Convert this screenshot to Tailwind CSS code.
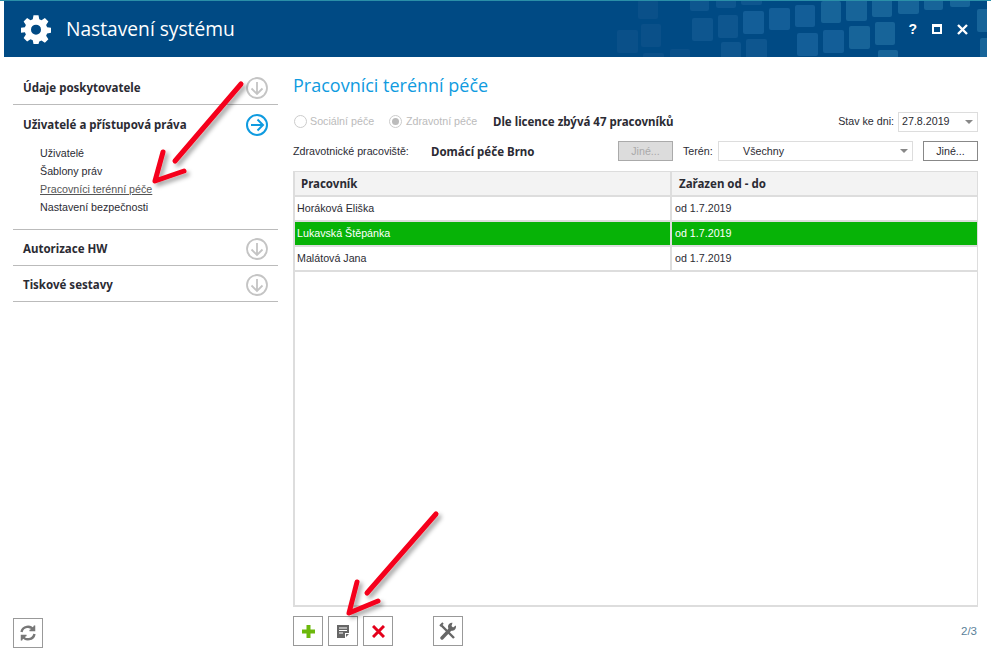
<!DOCTYPE html>
<html lang="cs">
<head>
    <meta charset="UTF-8">
    <title>Nastavení systému</title>
    <script src="https://cdn.jsdelivr.net/npm/@tailwindcss/browser@4"></script>
</head>
<body class="bg-white">
<div class="relative w-[991px] h-[658px] overflow-hidden bg-white font-['Liberation_Sans',sans-serif] text-[10.7px] text-[#2b2b33]">
    <!--Header-->
    <div class="h-px bg-[#2a8fa8]"></div>
    <div class="relative ml-[4px] w-[983px] h-[56px] bg-[#004a84] flex items-center overflow-hidden">
        <svg class="absolute left-0 top-0" width="983" height="56" viewBox="4 1 983 56">
            <g fill="#0a5089">
                <rect x="638" y="0" width="20" height="19" rx="2"/>
                <rect x="641" y="24" width="20" height="23" rx="2"/>
                <rect x="617" y="30" width="21" height="23" rx="2"/>
                <rect x="670" y="49" width="20" height="12" rx="2"/>
                <rect x="643" y="53" width="21" height="8" rx="2"/>
            </g>
            <g fill="#0e568f">
                <rect x="690" y="-4" width="19" height="15" rx="2"/>
                <rect x="716" y="-6" width="20" height="14" rx="2"/>
                <rect x="741" y="-8" width="21" height="13" rx="2"/>
                <rect x="692" y="18" width="21" height="23" rx="2"/>
                <rect x="718" y="15" width="20" height="23" rx="2"/>
                <rect x="721" y="42" width="20" height="22" rx="2"/>
                <rect x="746" y="39" width="21" height="23" rx="2"/>
            </g>
            <g fill="#135e98">
                <rect x="743" y="11" width="21" height="23" rx="2"/>
                <rect x="769" y="8" width="21" height="22" rx="2"/>
                <rect x="795" y="5" width="20" height="22" rx="2"/>
                <rect x="797" y="33" width="21" height="23" rx="2"/>
                <rect x="823" y="30" width="21" height="23" rx="2"/>
            </g>
            <g fill="#176499">
                <rect x="821" y="1" width="20" height="22" rx="2"/>
                <rect x="846" y="-2" width="21" height="23" rx="2"/>
                <rect x="872" y="-6" width="20" height="23" rx="2"/>
                <rect x="898" y="-9" width="21" height="23" rx="2"/>
                <rect x="924" y="-13" width="19" height="23" rx="2"/>
                <rect x="950" y="-16" width="20" height="23" rx="2"/>
                <rect x="977" y="9" width="14" height="23" rx="2"/>
                <rect x="980" y="38" width="11" height="23" rx="2"/>
                <rect x="849" y="26" width="21" height="23" rx="2"/>
                <rect x="875" y="22" width="20" height="23" rx="2"/>
                <rect x="878" y="50" width="20" height="14" rx="2"/>
                <rect x="826" y="57" width="20" height="8" rx="2"/>
            </g>
        </svg>
        <svg class="relative ml-[17px]" width="30" height="30" viewBox="0 0 24 24" fill="#fff"><path fill-rule="evenodd" d="M10 1h4l.6 3.2 1.800.8 2.700-1.800 2.800 2.800L20.100 8.700l.8 1.800 3.100.5v4l-3.100.6-.8 1.800 1.800 2.700-2.800 2.800-2.700-1.800-1.800.8L14 24h-4l-.6-3.100-1.800-.8-2.700 1.800-2.800-2.800 1.800-2.700-.8-1.800L0 15v-4l3.100-.5.800-1.800L2.100 6l2.800-2.800 2.700 1.800 1.800-.8zM12 8.500a4 4 0 1 0 0 8 4 4 0 0 0 0-8z"/></svg>
        <div class="relative ml-[15px] text-[19.2px] text-white font-['Open_Sans',sans-serif]">Nastavení systému</div>
        <div class="relative ml-auto mr-[19px] flex items-center gap-[15px]">
            <span class="text-[14px] font-bold text-white">?</span>
            <div class="w-[10px] h-[10px] border-2 border-t-[3px] border-white"></div>
            <svg width="11" height="11" viewBox="0 0 11 11" stroke="#fff" stroke-width="2.400"><path d="M1 1l9 9M10 1l-9 9"/></svg>
        </div>
    </div>

    <div class="flex">
        <!--Sidebar-->
        <div class="w-[265px] ml-[13px] mt-[14px] h-[577px] flex flex-col">
            <div class="h-[34px] pl-[10px] flex items-center justify-between border-b border-[#bbb]">
                <b class="text-[11.5px] font-['Noto_Sans',sans-serif]">Údaje poskytovatele</b>
                <svg class="mr-[10px]" width="22" height="22" viewBox="0 0 22 22" fill="none" stroke="#c4c4c4" stroke-width="1.800"><circle cx="11" cy="11" r="10"/><path d="M11 5v12M5.500 11.500L11 17l5.500-5.500"/></svg>
            </div>
            <div class="h-[125px] border-b border-[#bbb]">
                <div class="h-[39px] pl-[10px] flex items-center justify-between">
                    <b class="text-[11.5px] font-['Noto_Sans',sans-serif]">Uživatelé a přístupová práva</b>
                    <svg class="mr-[10px]" width="22" height="22" viewBox="0 0 22 22" fill="none" stroke="#0f9be0" stroke-width="2"><circle cx="11" cy="11" r="10"/><path d="M5 11h12M11.500 5.500L17 11l-5.500 5.500"/></svg>
                </div>
                <div class="pl-[27px] flex flex-col">
                    <span class="h-[18px] leading-[18px]">Uživatelé</span>
                    <span class="h-[18px] leading-[18px]">Šablony práv</span>
                    <span class="h-[18px] leading-[18px] underline text-[#555]">Pracovníci terénní péče</span>
                    <span class="h-[18px] leading-[18px]">Nastavení bezpečnosti</span>
                </div>
            </div>
            <div class="h-[36px] pl-[10px] pt-[3px] flex items-center justify-between border-b border-[#bbb]">
                <b class="text-[11.5px] font-['Noto_Sans',sans-serif]">Autorizace HW</b>
                <svg class="mr-[10px]" width="22" height="22" viewBox="0 0 22 22" fill="none" stroke="#c4c4c4" stroke-width="1.800"><circle cx="11" cy="11" r="10"/><path d="M11 5v12M5.500 11.500L11 17l5.500-5.500"/></svg>
            </div>
            <div class="h-[36px] pl-[10px] pt-[3px] flex items-center justify-between border-b border-[#bbb]">
                <b class="text-[11.5px] font-['Noto_Sans',sans-serif]">Tiskové sestavy</b>
                <svg class="mr-[10px]" width="22" height="22" viewBox="0 0 22 22" fill="none" stroke="#c4c4c4" stroke-width="1.800"><circle cx="11" cy="11" r="10"/><path d="M11 5v12M5.500 11.500L11 17l5.500-5.500"/></svg>
            </div>
            <div class="mt-auto w-[30px] h-[30px] border border-[#999] flex items-center justify-center">
                <svg width="18" height="18" viewBox="0 0 18 18" fill="none" stroke="#777" stroke-width="2.400"><path d="M2.500 8a6.500 6.500 0 0 1 12-2M15.500 10a6.500 6.500 0 0 1-12 2"/><path d="M15.500 1.500v5h-5" stroke-width="1.500" fill="#777"/><path d="M2.500 16.500v-5h5" stroke-width="1.500" fill="#777"/></svg>
            </div>
        </div>

        <!--Content-->
        <div class="ml-[15px] w-[685px] flex flex-col">
            <h1 class="mt-[13px] h-[30px] leading-[30px] text-[18px] text-[#0f9be0] font-['Open_Sans',sans-serif]">Pracovníci terénní péče</h1>
            <div class="mt-[7px] h-[29px] flex items-center">
                <span class="ml-[1px] w-[13px] h-[13px] rounded-full border border-[#ccc]"></span>
                <span class="ml-[3px] w-[79px] text-[#bbb]">Sociální péče</span>
                <span class="w-[13px] h-[13px] rounded-full border border-[#ccc] flex items-center justify-center"><span class="w-[7px] h-[7px] rounded-full bg-[#bbb]"></span></span>
                <span class="ml-[4px] w-[87px] text-[#bbb]">Zdravotní péče</span>
                <b class="text-[11.5px] font-['Noto_Sans',sans-serif]">Dle licence zbývá 47 pracovníků</b>
                <span class="ml-auto">Stav ke dni:</span>
                <div class="ml-[4px] w-[80px] h-[20px] border border-[#ddd] pl-[3px] flex items-center justify-between">27.8.2019<span class="mr-[4px] w-0 h-0 border-x-[4px] border-x-transparent border-t-[4px] border-t-[#888]"></span></div>
            </div>
            <div class="h-[30px] flex items-center">
                <span class="w-[138px]">Zdravotnické pracoviště:</span>
                <b class="mt-px text-[11.5px] font-['Noto_Sans',sans-serif]">Domácí péče Brno</b>
                <div class="ml-auto w-[55px] h-[20px] bg-[#dcdcdc] border border-[#aaa] text-[#aaa] flex items-center justify-center">Jiné...</div>
                <span class="w-[35px] ml-[10px]">Terén:</span>
                <div class="w-[195px] h-[20px] border border-[#ddd] pl-[24px] flex items-center justify-between">Všechny<span class="mr-[4px] w-0 h-0 border-x-[4px] border-x-transparent border-t-[4px] border-t-[#888]"></span></div>
                <div class="ml-[10px] w-[55px] h-[20px] border border-[#888] flex items-center justify-center">Jiné...</div>
            </div>
            <!--Table-->
            <div class="mt-[5px] h-[436px] border-2 border-t border-r border-b-2 border-[#ddd]">
                <div class="h-[25px] bg-[#f3f3f3] flex items-center text-[11.5px] font-bold font-['Noto_Sans',sans-serif] border-b-2 border-[#ddd]">
                    <div class="w-[377px] pl-[6px] border-r-2 border-[#ddd] h-full flex items-center">Pracovník</div>
                    <div class="pl-[7px]">Zařazen od - do</div>
                </div>
                <div class="h-[25px] flex items-center border-b-2 border-[#ddd]">
                    <div class="w-[377px] pl-[2px] border-r-2 border-[#ddd] h-full flex items-center">Horáková Eliška</div>
                    <div class="pl-[3px]">od 1.7.2019</div>
                </div>
                <div class="h-[25px] flex items-center border-b-2 border-[#ddd] bg-[#07b307] text-white">
                    <div class="w-[377px] pl-[2px] border-r-2 border-[#ddd] h-full flex items-center">Lukavská Štěpánka</div>
                    <div class="pl-[3px]">od 1.7.2019</div>
                </div>
                <div class="h-[25px] flex items-center border-b-2 border-[#ddd]">
                    <div class="w-[377px] pl-[2px] border-r-2 border-[#ddd] h-full flex items-center">Malátová Jana</div>
                    <div class="pl-[3px]">od 1.7.2019</div>
                </div>
            </div>
            <!--Toolbar-->
            <div class="mt-[9px] flex items-center gap-[5px]">
                <div class="w-[30px] h-[30px] border border-[#999] flex items-center justify-center">
                    <svg width="13" height="13" viewBox="0 0 13 13" fill="#6cb80c"><path d="M4.500 0h4v4.500H13v4H8.500V13h-4V8.500H0v-4h4.500z"/></svg>
                </div>
                <div class="w-[30px] h-[30px] border border-[#999] flex items-center justify-center">
                    <svg width="12" height="13" viewBox="0 0 12 13" fill="#666"><path d="M0 0h12v8h-4v5H0z"/><path d="M2 3h8M2 5.500h8M2 8h4" stroke="#fff"/><path d="M9 9h3l-3 3z"/></svg>
                </div>
                <div class="w-[30px] h-[30px] border border-[#999] flex items-center justify-center">
                    <svg width="13" height="13" viewBox="0 0 13 13" stroke="#e4001b" stroke-width="3"><path d="M1 1l11 11M12 1L1 12"/></svg>
                </div>
                <div class="ml-[35px] w-[30px] h-[30px] border border-[#999] flex items-center justify-center">
                    <svg width="18" height="18" viewBox="0 0 18 18" fill="none" stroke="#666"><path d="M2.500 3.500L15 16" stroke-width="2.400"/><path d="M1 4L4 1" stroke-width="2"/><path d="M3 16L12 6.500" stroke-width="3.400" stroke-linecap="round"/><path d="M16.800 3.600A4 4 0 1 1 13.500 .8L12.500 4l1.500 1.500z" fill="#666" stroke="none"/></svg>
                </div>
                <span class="ml-auto mr-px mt-[2px] text-[11.5px] text-[#5b7f99]">2/3</span>
            </div>
        </div>
    </div>

    <!--Red annotation arrows-->
    <svg class="absolute left-0 top-0" width="991" height="658" fill="none" stroke="#f5001a" stroke-linecap="round" stroke-linejoin="round">
        <defs><filter id="sh" x="-20%" y="-20%" width="140%" height="140%"><feDropShadow dx="3" dy="3" stdDeviation="2" flood-color="#000" flood-opacity=".35"/></filter></defs>
        <g filter="url(#sh)">
            <path d="M241 84L175 161" stroke-width="5"/>
            <path d="M163 152L155 181L184 171" stroke-width="5"/>
            <path d="M436 514L367 593" stroke-width="5"/>
            <path d="M357 582L349 613L378 601" stroke-width="5"/>
        </g>
    </svg>
</div>
</body>
</html>
